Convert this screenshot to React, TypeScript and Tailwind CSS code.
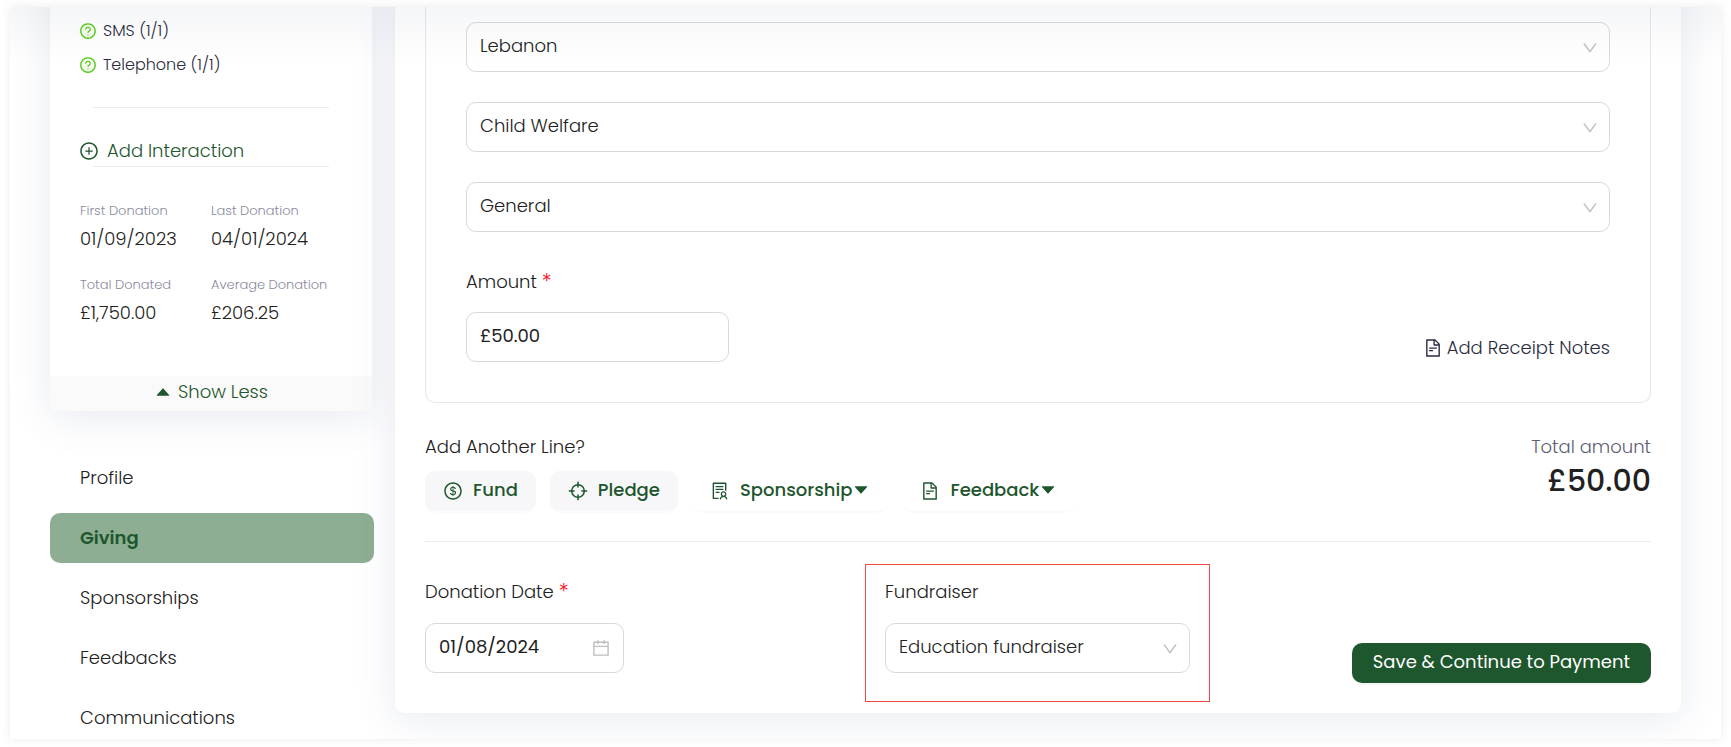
import { useState } from "react";
import type { ReactNode } from "react";
import {
  AiFillCaretDown,
  AiFillCaretUp,
  AiOutlineCalendar,
  AiOutlineDollarCircle,
  AiOutlineDown,
  AiOutlineFileText,
  AiOutlinePlusCircle,
  AiOutlineQuestionCircle,
  AiOutlineSolution,
} from "react-icons/ai";

const interactions = ["SMS (1/1)", "Telephone (1/1)"];

const stats = [
  { label: "First Donation", value: "01/09/2023" },
  { label: "Last Donation", value: "04/01/2024" },
  { label: "Total Donated", value: "£1,750.00" },
  { label: "Average Donation", value: "£206.25" },
];

const navItems = ["Profile", "Giving", "Sponsorships", "Feedbacks", "Communications"];

function PledgeIcon() {
  return (
    <svg viewBox="0 0 20 20" className="size-5" fill="none" stroke="currentColor" strokeWidth="1.5" aria-hidden="true">
      <circle cx="10" cy="10" r="6.3" />
      <path d="M10 0.8V6.6M10 13.4V19.2M0.8 10H6.6M13.4 10H19.2" />
    </svg>
  );
}

function SelectField({ id, label, value }: { id: string; label?: string; value: string }) {
  return (
    <div className="relative">
      <select
        id={id}
        aria-label={label}
        className="h-[50px] w-full appearance-none rounded-[10px] border border-[#d9d9d9] bg-transparent pr-10 pb-0.5 pl-[13px] text-lg outline-none"
      >
        <option>{value}</option>
      </select>
      <AiOutlineDown className="pointer-events-none absolute top-[17px] right-[11px] size-[18px] text-[#bfbfbf]" />
    </div>
  );
}

function LineButton({ icon, children, filled }: { icon: ReactNode; children: ReactNode; filled?: boolean }) {
  return (
    <button
      type="button"
      className={
        "flex h-10 items-center gap-2.5 rounded-[10px] px-[18px] text-lg font-medium text-[#1e562d] shadow-[0_2px_0_rgba(0,0,0,0.016)] " +
        (filled ? "bg-[#f7f7f9]" : "bg-transparent")
      }
    >
      {icon}
      <span className="flex items-center pb-0.5">{children}</span>
    </button>
  );
}

function Required() {
  return <span className="font-['Inter',sans-serif] text-xl leading-none text-[#f5222d]">*</span>;
}

function Sidebar() {
  return (
    <aside className="w-[324px] shrink-0">
      <section className="-mt-10 mr-0.5 overflow-hidden rounded-[10px] bg-white pt-10 shadow-[0_6px_40px_rgba(70,90,150,0.13)]">
        <div className="px-[30px] pt-2.5">
          <ul className="flex flex-col gap-2.5 text-base">
            {interactions.map((item) => (
              <li key={item} className="flex h-6 items-center gap-1.5 pt-1 text-[#2b2b40]">
                <AiOutlineQuestionCircle className="-ml-px size-[18px] rounded-full bg-[#f6ffed] text-[#52c41a]" />
                {item}
              </li>
            ))}
          </ul>
          <hr className="mx-[13px] mt-8 border-[#ececee]" />
          <a href="#add-interaction" className="mt-7 flex h-[30px] items-center gap-2 text-lg text-[#1e562d]">
            <AiOutlinePlusCircle className="-ml-px size-5" />
            Add Interaction
          </a>
          <hr className="mx-[13px] border-[#ececee]" />
          <dl className="grid grid-cols-[131px_1fr] gap-y-[18px] pt-8 pb-[47px]">
            {stats.map((stat) => (
              <div key={stat.label}>
                <dt className="text-[13px] leading-6 whitespace-nowrap text-[#8a8a9e]">{stat.label}</dt>
                <dd className="text-lg leading-8">{stat.value}</dd>
              </div>
            ))}
          </dl>
        </div>
        <button
          type="button"
          className="flex h-[35px] w-full items-center justify-center gap-1.5 bg-[#fafafa] pb-1 text-lg text-[#1e562d]"
        >
          <AiFillCaretUp className="size-[18px]" />
          Show Less
        </button>
      </section>
      <nav className="mt-[42px] flex flex-col gap-2.5">
        {navItems.map((item) => (
          <a
            key={item}
            href={"#" + item.toLowerCase()}
            className={
              "flex h-[50px] items-center rounded-[10px] px-[30px] text-lg " +
              (item === "Giving" ? "bg-[#8eae93] font-semibold text-[#1e562d]" : "")
            }
          >
            {item}
          </a>
        ))}
      </nav>
    </aside>
  );
}

function DonationCard() {
  const [amount, setAmount] = useState("£50.00");
  const [date, setDate] = useState("01/08/2024");
  const fieldText = "h-[50px] rounded-[10px] border border-[#d9d9d9] bg-transparent pb-1 pl-[13px] text-lg font-normal outline-none";

  return (
    <main className="-mt-10 min-w-0 flex-1 self-start rounded-[10px] bg-white px-[30px] pt-10 shadow-[0_6px_40px_rgba(70,90,150,0.13)]">
      <section className="rounded-b-[10px] border border-t-0 border-[#e6e6ec] px-10 pt-[15px] pb-10">
        <div className="flex flex-col gap-[30px]">
          <SelectField id="country" label="Country" value="Lebanon" />
          <SelectField id="theme" label="Theme" value="Child Welfare" />
          <SelectField id="fund" label="Fund" value="General" />
        </div>
        <div className="mt-9 flex items-end justify-between">
          <div className="flex flex-col gap-4">
            <label htmlFor="amount" className="h-7 text-lg leading-7">
              Amount <Required />
            </label>
            <input
              id="amount"
              value={amount}
              onChange={(event) => setAmount(event.target.value)}
              className={"w-[263px] " + fieldText}
            />
          </div>
          <a href="#receipt-notes" className="flex items-center gap-1 text-lg text-[#2b2b40]">
            <AiOutlineFileText className="size-5" />
            Add Receipt Notes
          </a>
        </div>
      </section>

      <section className="flex items-start justify-between pt-7">
        <div>
          <h2 className="text-lg leading-8">Add Another Line?</h2>
          <div className="mt-2 flex gap-x-[14px]">
            <LineButton filled icon={<AiOutlineDollarCircle className="size-5" />}>
              Fund
            </LineButton>
            <LineButton filled icon={<PledgeIcon />}>
              Pledge
            </LineButton>
            <LineButton icon={<AiOutlineSolution className="size-5" />}>
              Sponsorship
              <AiFillCaretDown className="size-[18px]" />
            </LineButton>
            <LineButton icon={<AiOutlineFileText className="size-5" />}>
              Feedback
              <AiFillCaretDown className="size-[18px]" />
            </LineButton>
          </div>
        </div>
        <div className="text-right">
          <p className="text-lg leading-8 text-[#5e5e72]">Total amount</p>
          <p className="text-3xl leading-9 font-medium">{amount}</p>
        </div>
      </section>

      <hr className="mt-[30px] border-[#ececee]" />

      <section className="grid grid-cols-[440px_345px_1fr] items-start pt-[22px] pb-[11px]">
        <div className="flex flex-col gap-[17px] pt-[14px]">
          <label htmlFor="donation-date" className="h-7 text-lg leading-7">
            Donation Date <Required />
          </label>
          <div className="relative w-[199px]">
            <input
              id="donation-date"
              value={date}
              onChange={(event) => setDate(event.target.value)}
              className={"w-full " + fieldText}
            />
            <AiOutlineCalendar className="pointer-events-none absolute top-[15px] right-[13px] size-5 text-[#bfbfbf]" />
          </div>
        </div>
        <div className="flex h-[138px] flex-col gap-[17px] border border-[#f04747] px-[19px] pt-[13px]">
          <label htmlFor="fundraiser" className="h-7 text-lg leading-7">
            Fundraiser
          </label>
          <SelectField id="fundraiser" value="Education fundraiser" />
        </div>
        <button
          type="button"
          className="mt-[79px] h-10 justify-self-end rounded-[10px] bg-[#1e562d] px-[21px] pb-0.5 text-lg font-normal whitespace-nowrap text-white shadow-[0_2px_0_rgba(0,0,0,0.04)]"
        >
          Save &amp; Continue to Payment
        </button>
      </section>
    </main>
  );
}

export default function App() {
  return (
    <div className="h-screen overflow-hidden bg-white px-2.5 pt-[7px] pb-2 font-['Poppins','Inter',sans-serif] font-light text-[#212121]">
      <div className="relative flex h-full gap-[21px] overflow-hidden bg-white pr-10 pl-10 shadow-[0_0_10px_rgba(0,0,0,0.08)]">
        <Sidebar />
        <DonationCard />
        <div className="pointer-events-none absolute inset-x-0 top-0 h-14 bg-linear-to-b from-[#3c506e]/5 to-transparent" />
      </div>
    </div>
  );
}
